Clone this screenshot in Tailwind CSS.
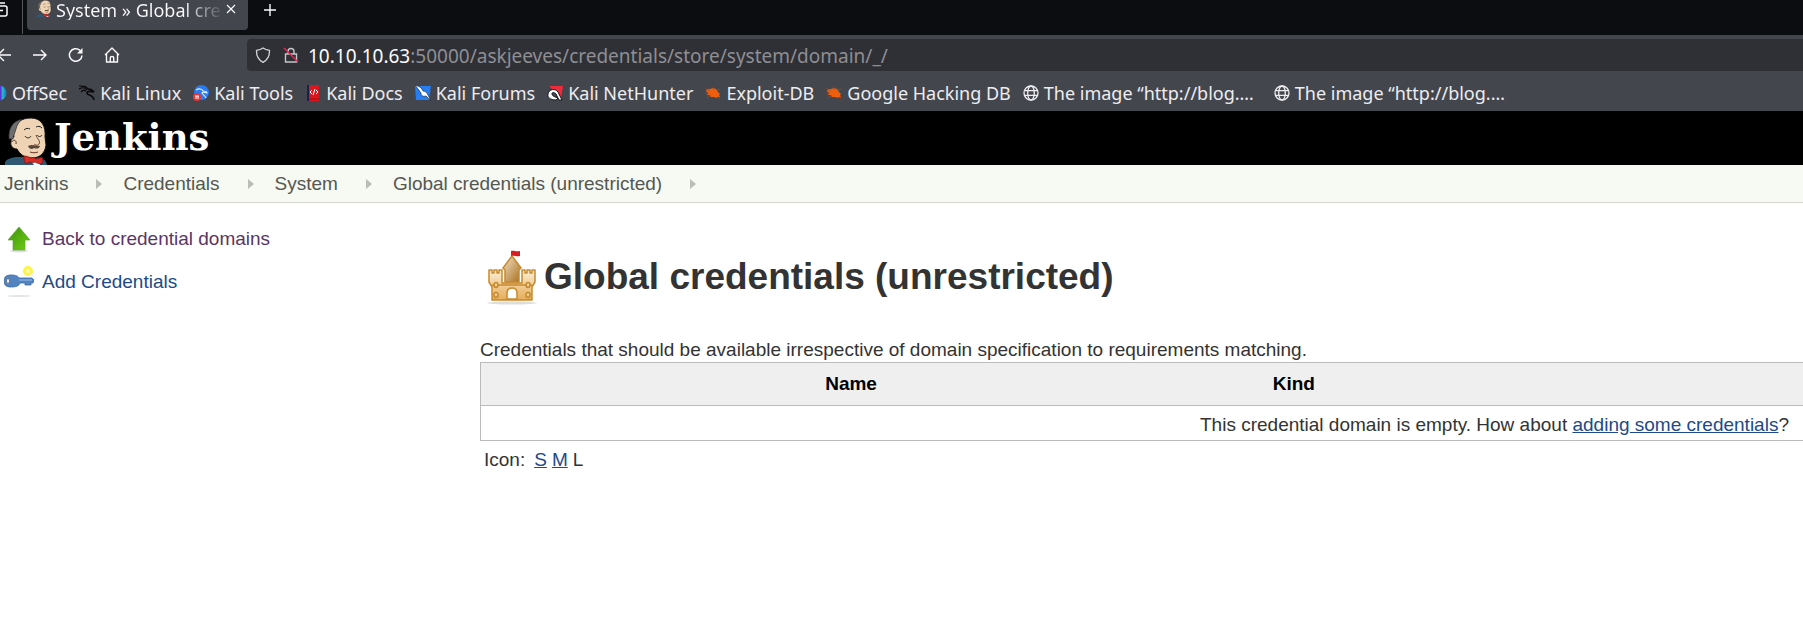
<!DOCTYPE html>
<html lang="en">
<head>
<meta charset="utf-8">
<title>System » Global credentials (unrestricted) [Jenkins]</title>
<script src="https://cdn.jsdelivr.net/npm/@tailwindcss/browser@4"></script>
</head>
<body class="min-h-screen overflow-x-hidden bg-white font-['Liberation_Sans',Arial,sans-serif] text-[19px] leading-5 text-[#333333]">

<svg class="absolute h-0 w-0" aria-hidden="true">
  <defs>
    <linearGradient id="wood" x1="0" y1="0" x2="0" y2="1"><stop offset="0" stop-color="#fbeed6"/><stop offset="1" stop-color="#e5ad58"/></linearGradient>
    <linearGradient id="tower" x1="0" y1="0" x2="1" y2="1"><stop offset="0" stop-color="#f2e3c8"/><stop offset="1" stop-color="#a86f1c"/></linearGradient>
    <linearGradient id="leaf" x1="0" y1="0" x2="1" y2="1"><stop offset="0" stop-color="#3f8f12"/><stop offset="1" stop-color="#6fd00f"/></linearGradient>
    <linearGradient id="off" x1="0" y1="0" x2="1" y2="0"><stop offset="0.65" stop-color="#5b35d5"/><stop offset="0.7" stop-color="#26c2c9"/><stop offset="1" stop-color="#1873c9"/></linearGradient>
    <symbol id="butler" viewBox="0 0 44 48">
      <path d="M1 48c-1-5 4-7 11-8h20c7 1 10 3 11 8z" fill="#2f5872"/>
      <path d="M9 15C11 5 18 1 27 1c11 0 15 9 14 19l1 8c-1 9-7 13-14 13-8 0-12-4-15-9-4 0-7-3-6-7 0-4 2-5 3-5z" fill="#eed4b4" stroke="#151515" stroke-width="1"/>
      <path d="M5 22C4 11 9 4 18 2c-3 3-5 6-6 10l-2 6-1 4z" fill="#6e6d70" stroke="#1c1c1c" stroke-width=".6"/>
      <path d="M8 25c1-3 5-2 4 2" fill="none" stroke="#4a3328" stroke-width="1"/>
      <path d="M20 13c2-2 4-2 6-1M32 10c2-1 4-1 6 1M21 19c2 3 5 2 6 0M33 18c1 2 4 2 5 0" fill="none" stroke="#222" stroke-width="1"/>
      <path d="M32 18c1 4 5 6 3 9-1 2-4 1-5 0" fill="none" stroke="#6b4835" stroke-width="1"/>
      <path d="M24 29c4-2 8 0 12 0-1 3-4 3-6 2-2 2-5 1-6-2z" fill="#5a473b"/>
      <path d="M26 35c3 1 5 1 8 0" fill="none" stroke="#6b3325" stroke-width="1"/>
      <path d="m26 43 4 5h6l-1-5z" fill="#fff"/>
      <path d="M20 39c3 0 5 1 7 2 2-1 4 0 5 1l6-2c1 2 1 5 0 7-3 0-5-1-7-2-2 1-3 1-5 0-2 1-4 2-5 1-1-2-1-5-1-7z" fill="#d82b24" stroke="#701012" stroke-width=".7"/>
    </symbol>
    <symbol id="globe" viewBox="0 0 16 16"><g fill="none" stroke="currentColor" stroke-width="1.3"><circle cx="8" cy="8" r="7"/><ellipse cx="8" cy="8" rx="3.3" ry="7"/><path d="M1.5 5.6h13M1.5 10.4h13"/></g></symbol>
    <symbol id="bug" viewBox="0 0 16 16"><path d="m2 4 3 0 3-1 3 1 2 3 2 2-1 1 1 2-3-0 0 1-3-1-3 0-2-2-2 0 1-2-2-2z" fill="#ee5f0d"/><path d="M0 3l5 3M0 8h4M2 13l4-3M7 2l2 3M12 5l3-1M13 12l2 2" stroke="#9b4b20" stroke-width=".7"/></symbol>
  </defs>
</svg>

<header class="bg-[#44464e] font-['Noto_Sans',sans-serif] text-[#fbfbfe]">
  <div class="flex h-[35px] items-start overflow-hidden bg-[#0c0d11]">
    <button class="flex h-[34px] w-[23px] shrink-0 items-start border-r border-[#55565b]" aria-label="Firefox View">
      <svg class="h-[20px] w-[9px]" viewBox="0 0 9 20" fill="none" stroke="currentColor" stroke-width="1.5"><path d="M0 3h5"/><path d="M0 6h5q2 0 2 2v6q0 2-2 2H0M0 10.500h3"/></svg>
    </button>
    <div class="ml-1 flex h-[30px] w-[221px] shrink-0 items-start rounded-b bg-[#44464e] pl-[9px]">
      <svg class="h-[17px] w-4 shrink-0"><use href="#butler"/></svg>
      <span class="ml-1 w-[170px] shrink-0 whitespace-nowrap bg-linear-to-r from-[#fbfbfe] from-75% to-[#44464e] bg-clip-text text-[18px] leading-5 text-transparent">System » Global cre</span>
      <button class="pt-1" aria-label="Close tab"><svg class="h-[10px] w-[10px]" viewBox="0 0 10 10" stroke="currentColor" stroke-width="1.2"><path d="m1 1 8 8M9 1 1 9"/></svg></button>
    </div>
    <button class="ml-4 pt-1" aria-label="New tab"><svg class="h-3 w-3" viewBox="0 0 12 12" stroke="currentColor" stroke-width="1.4"><path d="M6 0v12M0 6h12"/></svg></button>
  </div>

  <div class="flex h-10 items-center">
    <nav class="flex w-[247px] shrink-0 items-center gap-5 overflow-hidden" aria-label="Browser navigation">
      <button class="-ml-1" aria-label="Back"><svg class="h-4 w-4" viewBox="0 0 16 16" fill="none" stroke="currentColor" stroke-width="1.4"><path d="M15 8H2M8 2 2 8l6 6"/></svg></button>
      <button aria-label="Forward"><svg class="h-4 w-4" viewBox="0 0 16 16" fill="none" stroke="currentColor" stroke-width="1.4"><path d="M1 8h13M9 3l5 5-5 5"/></svg></button>
      <button aria-label="Reload"><svg class="h-4 w-4" viewBox="0 0 16 16" fill="none" stroke="currentColor" stroke-width="1.5"><path d="M14 8.500A6.300 6.300 0 1 1 12 3.400"/><path d="M14.500 1v5.500H9z" fill="currentColor" stroke="none"/></svg></button>
      <button aria-label="Home"><svg class="h-4 w-4" viewBox="0 0 16 16" fill="none" stroke="currentColor" stroke-width="1.4" stroke-linejoin="round"><path d="m1 8 7-7 7 7M2.500 7v8h11V7M6.300 15v-4.500q0-1 1.700-1t1.700 1V15"/></svg></button>
    </nav>
    <div class="flex h-8 flex-1 items-center rounded-l bg-[#2f3036] pl-2">
      <svg class="h-4 w-4" viewBox="0 0 16 16" fill="none" stroke="#d5d5da" stroke-width="1.3" stroke-linejoin="round"><path d="M8 1C6 2.500 4 3 1.500 3.300 1.300 9 3.500 13 8 15.300 12.500 13 14.700 9 14.500 3.300 12 3 10 2.500 8 1z"/></svg>
      <svg class="ml-3 h-4 w-4" viewBox="0 0 16 16" fill="none" stroke="#c5c5ca" stroke-width="1.4"><path d="M5 7V4.500a3 3 0 0 1 6 0V7M2.500 7h11v8h-11z"/><path d="m1 1 14 14" stroke="#e22850"/></svg>
      <a href="#" class="ml-[9px] pt-px text-[19px] leading-6 text-[#8e8e93]"><span class="text-[#fbfbfe]">10.10.10.63</span>:50000/askjeeves/credentials/store/system/domain/_/</a>
    </div>
  </div>

  <nav class="flex h-9 items-center gap-3 overflow-hidden whitespace-nowrap pb-px text-[18px] leading-6 text-[#ededf0]" aria-label="Bookmarks">
    <a href="#" class="flex items-center gap-[5px]"><svg class="-ml-[9px] h-4 w-4 shrink-0" viewBox="0 0 16 16"><circle cx="8" cy="8" r="7.500" fill="url(#off)"/></svg>OffSec</a>
    <a href="#" class="flex items-center gap-[5px]"><svg class="h-4 w-4" viewBox="0 0 16 16" fill="none" stroke="#090909" stroke-width="1.200"><path d="M0 1c4 0 7 0 9 3M0 4c4-2 7-1 8 1M2 7c2-2 4-2 5-1"/><path d="M9 4c4 0 4 1 6 3-3-1-7-1-7 1 0 3 6 1 7 7" stroke-width="1.600"/></svg>Kali Linux</a>
    <a href="#" class="flex items-center gap-[5px]"><svg class="h-4 w-4" viewBox="0 0 16 16"><circle cx="8.500" cy="7.500" r="7.500" fill="#287af5"/><path d="M3 5c3-2 6-1 7 1 3 0 4 1 4 2-3-1-5-1-5 0s3 2 4 5" fill="none" stroke="#dfefff" stroke-width="1.100"/><circle cx="4" cy="12" r="4" fill="#ed3434"/><path d="M2 11h4M3 11v3M5 11v3" stroke="#fff"/></svg>Kali Tools</a>
    <a href="#" class="flex items-center gap-[5px]"><svg class="h-4 w-4" viewBox="0 0 16 16"><path d="M2 0h12v16H2z" fill="#db161d"/><path d="M2 0h2v16H2z" fill="#16234f"/><path d="m7 5-2 2 2 2M11 5l2 2-2 2M10 4 8 10" fill="none" stroke="#fff"/><path d="M4 14h10" stroke="#a00d12"/></svg>Kali Docs</a>
    <a href="#" class="flex items-center gap-[5px]"><svg class="h-4 w-4" viewBox="0 0 16 16"><path d="M0 1h16l-2 14H1z" fill="#277df2"/><path d="M0 0c4 1 7 3 8 6 3 0 4 2 5 4l3 6-5-5c-4 1-5-1-5-3C4 5 2 3 0 0z" fill="#fff" stroke="#182a42" stroke-width=".7"/></svg>Kali Forums</a>
    <a href="#" class="flex items-center gap-[5px]"><svg class="h-4 w-4" viewBox="0 0 16 16"><path d="M2 1h14l-2 12z" fill="#ee2b3a"/><path d="M1 9C2 4 8 3 11 7l4 8-3 0-3-6C7 7 5 7 5 9c0 2 3 3 6 4l-2 2c-6 0-9-3-8-6z" fill="#fff" stroke="#17171d" stroke-width="1"/></svg>Kali NetHunter</a>
    <a href="#" class="flex items-center gap-[5px]"><svg class="h-4 w-4"><use href="#bug"/></svg>Exploit-DB</a>
    <a href="#" class="flex items-center gap-[5px]"><svg class="h-4 w-4"><use href="#bug"/></svg>Google Hacking DB</a>
    <a href="#" class="flex items-center gap-[5px]"><svg class="h-4 w-4"><use href="#globe"/></svg>The image “http://blog.…</a>
    <a href="#" class="ml-2 flex items-center gap-[5px]"><svg class="h-4 w-4"><use href="#globe"/></svg>The image “http://blog.…</a>
  </nav>
</header>

<div class="flex h-[54px] items-end bg-black pl-1">
  <a href="#" class="flex items-end text-white">
    <svg class="h-12 w-11"><use href="#butler"/></svg>
    <span class="ml-[6px] pb-[5px] font-['DejaVu_Serif','Liberation_Serif',serif] text-[37px] leading-[46px] font-bold">Jenkins</span>
  </a>
</div>

<nav class="flex h-[38px] items-center border-b border-[#d3d7cf] bg-[#f6faf2] pl-1" aria-label="Breadcrumb">
  <ol class="flex items-center text-[#555753]">
    <li class="flex items-center"><a href="#">Jenkins</a><svg class="mr-[21px] ml-[28px] h-[10px] w-[6px]" viewBox="0 0 6 10"><path d="m0 0 6 5-6 5z" fill="#babdb6"/></svg></li>
    <li class="flex items-center"><a href="#">Credentials</a><svg class="mr-[21px] ml-[28px] h-[10px] w-[6px]" viewBox="0 0 6 10"><path d="m0 0 6 5-6 5z" fill="#babdb6"/></svg></li>
    <li class="flex items-center"><a href="#">System</a><svg class="mr-[21px] ml-[28px] h-[10px] w-[6px]" viewBox="0 0 6 10"><path d="m0 0 6 5-6 5z" fill="#babdb6"/></svg></li>
    <li class="flex items-center"><a href="#">Global credentials (unrestricted)</a><svg class="ml-[28px] h-[10px] w-[6px]" viewBox="0 0 6 10"><path d="m0 0 6 5-6 5z" fill="#babdb6"/></svg></li>
  </ol>
</nav>

<div class="flex">
  <aside class="flex w-[480px] shrink-0 flex-col gap-3 pt-5 pl-1">
    <a href="#" class="flex items-center gap-2 text-[#5c3566]">
      <svg class="h-[31px] w-[30px]" viewBox="0 0 30 31"><ellipse cx="15" cy="28" rx="9" ry="1.500" fill="#ddd"/><path d="m15 4 11 13h-5v10H9V17H4z" fill="url(#leaf)" stroke="#62a63a" stroke-width=".7"/></svg>
      Back to credential domains
    </a>
    <a href="#" class="flex items-center gap-2 text-[#204a87]">
      <svg class="h-[31px] w-[30px]" viewBox="0 0 30 31"><ellipse cx="15" cy="30" rx="12" ry="1" fill="#e5e5e5"/><circle cx="24" cy="5" r="5" fill="#fcf34d"/><circle cx="24" cy="5" r="2" fill="#fffbb0"/><path d="M7 9c5 0 7 1 8 3h13l2 2-1 3h-2v2h-6v-2h-5c-1 3-4 4-9 4-5 0-7-2-7-6s2-6 7-6z" fill="#5384c0" stroke="#3869a9" stroke-width=".8"/><path d="M15 14h13" stroke="#91b5df" stroke-width="1.200"/><ellipse cx="4" cy="15" rx="1.700" ry="2.500" fill="#e7edf4" stroke="#61717f"/></svg>
      Add Credentials
    </a>
  </aside>

  <main class="min-w-0 flex-1 pt-[46px]">
    <h1 class="flex items-center gap-1 pl-1 text-[37px] leading-[54px] font-bold">
      <svg class="h-14 w-14 shrink-0" viewBox="0 0 56 56"><ellipse cx="28" cy="54" rx="25" ry="1.500" fill="#ddd"/><g fill="url(#wood)" stroke="#c8892d" stroke-width="1.500" stroke-linejoin="round"><path d="M5 21h3v3h2v-3h3v3h2v-3h3v13h20V21h3v3h2v-3h3v3h2v-3h3v12l-3 5v13H8V38l-3-5z"/><path d="M28 7 19 19l2 2v12h14V21l2-2z" fill="url(#tower)"/><path d="M28 39c-4 0-5 2-5 5v6h10v-6c0-3-1-5-5-5z" fill="#fff"/><path d="M8 36h40" fill="none"/><ellipse cx="12" cy="36" rx="2" ry="2.500"/><ellipse cx="44" cy="36" rx="2" ry="2.500"/><ellipse cx="12" cy="46" rx="2" ry="2.500"/><ellipse cx="44" cy="46" rx="2" ry="2.500"/></g><path d="M27 2c3-1 5 1 9 0v5c-4 1-6-1-9 0z" fill="#d81d23"/></svg>
      Global credentials (unrestricted)
    </h1>
    <p class="mt-[33px] leading-6 whitespace-nowrap">Credentials that should be available irrespective of domain specification to requirements matching.</p>
    <table class="w-full table-fixed border-collapse border border-r-0 border-[#bbbbbb]">
      <colgroup><col class="w-[56%]"><col class="w-[11%]"><col></colgroup>
      <thead>
        <tr class="h-[43px] border-b border-[#bbbbbb] bg-[#efefef] text-black">
          <th scope="col">Name</th><th scope="col">Kind</th><td></td>
        </tr>
      </thead>
      <tbody>
        <tr class="h-[35px]"><td colspan="3" class="pt-1 pr-[14px] text-right">This credential domain is empty. How about <a href="#" class="text-[#204a87] underline">adding some credentials</a>?</td></tr>
      </tbody>
    </table>
    <div class="mt-[9px] flex gap-[5px] pl-1"><span class="mr-1">Icon:</span><a href="#" class="text-[#204a87] underline">S</a><a href="#" class="text-[#204a87] underline">M</a><span>L</span></div>
  </main>
</div>
</body>
</html>
